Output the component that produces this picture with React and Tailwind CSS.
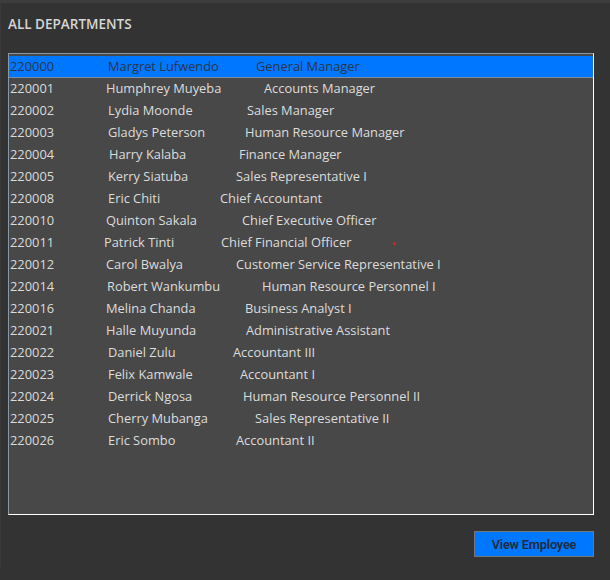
import React from 'react';

const rows = [
    { id: '220000', name: 'Margret Lufwendo', title: 'General Manager', idW: 'w-[98px]', nameW: 'w-[148px]' },
    { id: '220001', name: 'Humphrey Muyeba', title: 'Accounts Manager', idW: 'w-[96px]', nameW: 'w-[158px]' },
    { id: '220002', name: 'Lydia Moonde', title: 'Sales Manager', idW: 'w-[98px]', nameW: 'w-[139px]' },
    { id: '220003', name: 'Gladys Peterson', title: 'Human Resource Manager', idW: 'w-[98px]', nameW: 'w-[137px]' },
    { id: '220004', name: 'Harry Kalaba', title: 'Finance Manager', idW: 'w-[99px]', nameW: 'w-[130px]' },
    { id: '220005', name: 'Kerry Siatuba', title: 'Sales Representative I', idW: 'w-[98px]', nameW: 'w-[128px]' },
    { id: '220008', name: 'Eric Chiti', title: 'Chief Accountant', idW: 'w-[98px]', nameW: 'w-[112px]' },
    { id: '220010', name: 'Quinton Sakala', title: 'Chief Executive Officer', idW: 'w-[96px]', nameW: 'w-[136px]' },
    { id: '220011', name: 'Patrick Tinti', title: 'Chief Financial Officer', idW: 'w-[94px]', nameW: 'w-[117px]' },
    { id: '220012', name: 'Carol Bwalya', title: 'Customer Service Representative I', idW: 'w-[96px]', nameW: 'w-[130px]' },
    { id: '220014', name: 'Robert Wankumbu', title: 'Human Resource Personnel I', idW: 'w-[97px]', nameW: 'w-[155px]' },
    { id: '220016', name: 'Melina Chanda', title: 'Business Analyst I', idW: 'w-[96px]', nameW: 'w-[139px]' },
    { id: '220021', name: 'Halle Muyunda', title: 'Administrative Assistant', idW: 'w-[96px]', nameW: 'w-[140px]' },
    { id: '220022', name: 'Daniel Zulu', title: 'Accountant III', idW: 'w-[98px]', nameW: 'w-[125px]' },
    { id: '220023', name: 'Felix Kamwale', title: 'Accountant I', idW: 'w-[98px]', nameW: 'w-[132px]' },
    { id: '220024', name: 'Derrick Ngosa', title: 'Human Resource Personnel II', idW: 'w-[98px]', nameW: 'w-[135px]' },
    { id: '220025', name: 'Cherry Mubanga', title: 'Sales Representative II', idW: 'w-[98px]', nameW: 'w-[147px]' },
    { id: '220026', name: 'Eric Sombo', title: 'Accountant II', idW: 'w-[98px]', nameW: 'w-[128px]' },
];

export default function App() {
    return (
        <div className="h-[580px] w-[610px] bg-[#333333] font-['Open_Sans','Noto_Sans',sans-serif]">
            <div className="h-[3px] bg-[#3d3d3d]" />
            <div className="relative h-[564px] border-l border-[#3a3a3a] pl-[7px] pr-[16px]">
                <h2 className="flex h-[40px] items-center pt-[3px] text-[13.5px] font-semibold text-[#d6d6d6]">
                    ALL DEPARTMENTS
                </h2>
                <div className="mt-[10px] h-[462px] border border-t-[#8a97a6] border-l-[#8a97a6] border-r-white border-b-white bg-[#484848] pt-[2px] text-[12.85px] text-[#dcdcdc]">
                    {rows.map((row, i) => (
                        <div
                            key={row.id}
                            className={`flex h-[22px] items-center whitespace-nowrap pl-[1px] ${i === 0 ? 'border-b border-[#7d8ea4] bg-[#0077ff] text-[#2a3647]' : ''}`}
                        >
                            <span className={row.idW}>{row.id}</span>
                            <span className={row.nameW}>{row.name}</span>
                            <span>{row.title}</span>
                        </div>
                    ))}
                </div>
                <div className="mt-[16px] flex justify-end">
                    <button className="h-[26px] w-[120px] border border-[#767676] bg-[#0077ff] pt-[1px] font-['Roboto',sans-serif] text-[12.8px] font-semibold tracking-[-0.2px] text-[#1f2a3a]">
                        View Employee
                    </button>
                </div>
                <span className="absolute left-[392px] top-[239px] h-[3px] w-[3px] rounded-full bg-[#e02020]" />
            </div>
        </div>
    );
}
